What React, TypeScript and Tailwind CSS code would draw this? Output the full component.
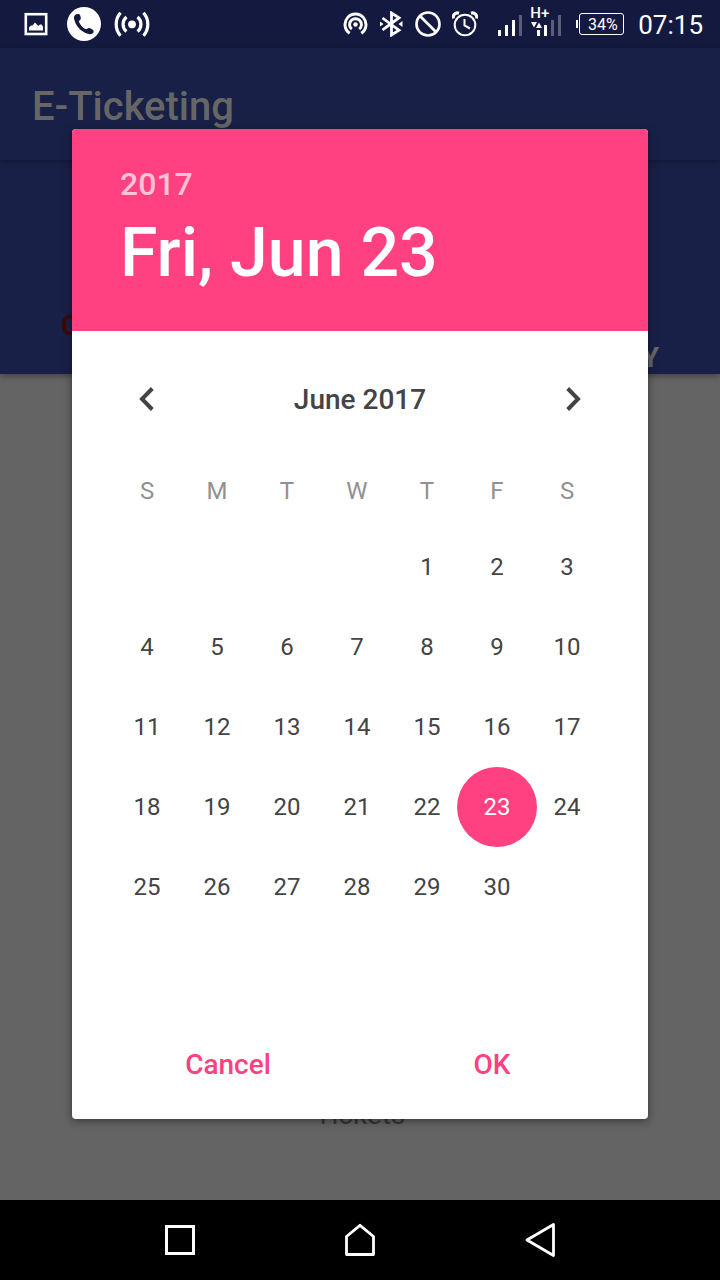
import React, { useState } from "react";

const WEEKDAYS = [
  { short: "S", name: "Sunday" },
  { short: "M", name: "Monday" },
  { short: "T", name: "Tuesday" },
  { short: "W", name: "Wednesday" },
  { short: "T", name: "Thursday" },
  { short: "F", name: "Friday" },
  { short: "S", name: "Saturday" },
];

const WEEKS: (number | null)[][] = [
  [null, null, null, null, 1, 2, 3],
  [4, 5, 6, 7, 8, 9, 10],
  [11, 12, 13, 14, 15, 16, 17],
  [18, 19, 20, 21, 22, 23, 24],
  [25, 26, 27, 28, 29, 30, null],
];

function StatusBar() {
  return (
    <header className="flex h-12 items-center justify-between bg-[#14193f] pr-4 pl-6 text-white">
      <div className="flex items-center">
        <svg className="h-6 w-6" viewBox="0 0 24 24" fill="none" aria-hidden="true">
          <rect x="1.800" y="2.200" width="20.400" height="19.800" stroke="#fff" strokeWidth="2.600" />
          <path d="M5 18.500V15.500l2-2h1.500L11 10.500l2.300 2.500 1 1 1.700-1.500h1.500l1.500 2v4z" fill="#fff" />
        </svg>
        <svg className="ml-[19px] h-[34px] w-[34px]" viewBox="0 0 34 34" aria-hidden="true">
          <circle cx="17" cy="17" r="17" fill="#fff" />
          <path
            d="M9.200 7.200c1.400-.6 3.300-.3 3.800.7.6 1.200.9 2.600.8 3.800-.2 1.300-1.700 1.900-2 2.600.7 2.600 4.300 7.100 7.200 8 .8-.1 1.800-1.600 3.200-1.300 1.300.3 2.700.9 3.700 1.700.9.8 1 2.500 0 3.500-1.200 1-3.300 1.200-5.300.6C13.500 24.600 8 18 7 11.300c-.3-1.800.7-3.400 2.200-4.100z"
            fill="#14193f"
          />
        </svg>
        <svg className="ml-[13px] h-7 w-9" viewBox="0 0 36 28" fill="none" stroke="#fff" strokeWidth="3.200" aria-hidden="true">
          <circle cx="18" cy="14.300" r="3.900" fill="#fff" stroke="none" />
          <path d="M12.500 7a9.500 9.500 0 0 0 0 14.600M23.500 7a9.500 9.500 0 0 1 0 14.600M6.500 2.800a17.500 17.500 0 0 0 0 23M29.500 2.800a17.500 17.500 0 0 1 0 23" />
        </svg>
      </div>

      <div className="flex items-center">
        <svg className="h-[26px] w-[26px]" viewBox="0 0 26 26" fill="none" stroke="#fff" strokeWidth="2.900" aria-hidden="true">
          <circle cx="12.500" cy="13.500" r="2.200" fill="#fff" stroke="none" />
          <path d="M6.700 22.300a10.500 10.500 0 1 1 11.600 0M8.800 18.200a5.900 5.900 0 1 1 7.400 0" />
        </svg>
        <svg className="ml-[11px] h-[26px] w-6" viewBox="0 0 24 26" fill="none" stroke="#fff" strokeWidth="2.800" aria-hidden="true">
          <path d="M2.500 7 10.500 13l8.500 6.200-7.500 4.800V2L19 6.800 10.500 13l-8 6" />
          <path d="M0 10.500 3.500 13 0 15.500zM22.500 10l-4 3 4 3z" fill="#fff" stroke="none" />
        </svg>
        <svg className="ml-[11px] h-[26px] w-[26px]" viewBox="0 0 26 26" fill="none" stroke="#fff" strokeWidth="2.600" aria-hidden="true">
          <circle cx="13" cy="13" r="11.500" />
          <path d="M5 5l16 16" />
        </svg>
        <svg className="ml-[11px] h-[26px] w-[26px]" viewBox="0 0 26 26" fill="none" stroke="#fff" strokeWidth="2" aria-hidden="true">
          <circle cx="13" cy="14" r="10.300" />
          <path d="M12.500 8v6.500l5.500 3" />
          <path d="M1.300 7.500C.5 4 3.500 1.200 7 2.200M24.700 7.500C25.500 4 22.500 1.200 19 2.200" strokeWidth="3.200" />
        </svg>
        <svg className="ml-5 h-12 w-6" viewBox="0 0 24 48" fill="#fff" aria-hidden="true">
          <path d="M0 30h3v6H0zM7 25h3v11H7zM14 20h3v16h-3z" />
          <path d="M21 15h3v21h-3z" fill="#5b5e79" />
        </svg>
        <div className="relative ml-2 h-12 w-8">
          <span className="absolute top-1 left-0 text-[15px] leading-[18px] font-medium">H+</span>
          <svg className="h-12 w-8" viewBox="0 0 32 48" fill="#fff" aria-hidden="true">
            <path d="M1 22h6l-3 5.500zM6 28h6l-3-5.500zM7 30h3v6H7zM14 25h3v11h-3z" />
            <path d="M21 20h3v16h-3zM28 15h3v21h-3z" fill="#5b5e79" />
          </svg>
        </div>
        <div className="ml-3.5 flex items-center">
          <span className="h-2 w-0.5 bg-white" />
          <span className="ml-px flex h-[22px] w-[45px] items-center justify-center rounded-[3px] border border-white pt-0.5 pl-0.5 text-[16px] leading-5">
            34%
          </span>
        </div>
        <time className="ml-3.5 pt-0.5 pr-px text-[26px] leading-8">07:15</time>
      </div>
    </header>
  );
}

function DatePicker() {
  const [selected, setSelected] = useState(23);
  return (
    <section
      role="dialog"
      aria-label="Select date"
      className="w-full overflow-hidden rounded-[4px] bg-white shadow-[0_2px_8px_rgba(0,0,0,0.45)]"
    >
      <div className="bg-[#ff4081] px-12 pt-9 pb-[38px] text-white">
        <button type="button" className="block text-[32px] leading-[38px] font-medium text-[#ffc2d7]">
          2017
        </button>
        <h2 className="mt-2.5 text-[68px] leading-[80px] font-medium">Fri, Jun 23</h2>
      </div>

      <div className="flex h-[108px] items-center justify-between px-10 pt-7 text-[#444]">
        <button type="button" aria-label="Previous month" className="flex h-20 w-[70px] items-center justify-center">
          <svg className="h-6 w-4" viewBox="0 0 16 24" fill="none" stroke="#444" strokeWidth="4" aria-hidden="true">
            <path d="M13.300 1.500 3 12l10.300 10.500" />
          </svg>
        </button>
        <h3 className="pt-0.5 text-[28px] leading-8 font-medium">June 2017</h3>
        <button type="button" aria-label="Next month" className="flex h-20 w-[70px] items-center justify-center">
          <svg className="h-6 w-4" viewBox="0 0 16 24" fill="none" stroke="#444" strokeWidth="4" aria-hidden="true">
            <path d="M2.700 1.500 13 12 2.700 22.500" />
          </svg>
        </button>
      </div>

      <div className="pt-4 pr-[46px] pb-20 pl-10">
        <table className="w-full table-fixed text-center text-[24px] leading-7 text-[#444]">
          <thead>
            <tr className="h-[72px] text-[#919191]">
              {WEEKDAYS.map((d) => (
                <th key={d.name} scope="col" abbr={d.name} className="p-0 text-center font-normal">
                  {d.short}
                </th>
              ))}
            </tr>
          </thead>
          <tbody>
            {WEEKS.map((week, i) => (
              <tr key={i} className="h-20">
                {week.map((day, j) => (
                  <td key={j} className="p-0">
                    {day !== null && (
                      <button
                        type="button"
                        aria-pressed={day === selected}
                        onClick={() => setSelected(day)}
                        className={
                          day === selected
                            ? "-mx-[5px] flex h-20 w-20 items-center justify-center rounded-full bg-[#ff4081] text-white"
                            : "-mx-[5px] flex h-20 w-20 items-center justify-center rounded-full"
                        }
                      >
                        {day}
                      </button>
                    )}
                  </td>
                ))}
              </tr>
            ))}
          </tbody>
        </table>
      </div>

      <div className="grid h-28 grid-cols-2 px-6 text-[28px] leading-8 font-medium text-[#ff4081]">
        <button type="button" className="pt-1">Cancel</button>
        <button type="button" className="pt-1">OK</button>
      </div>
    </section>
  );
}

function NavBar() {
  return (
    <nav className="flex h-20 items-center justify-center gap-[140px] bg-black">
      <button type="button" aria-label="Recent apps">
        <svg className="h-10 w-10" viewBox="0 0 40 40" fill="none" stroke="#fff" strokeWidth="3" aria-hidden="true">
          <rect x="6.500" y="6.500" width="27" height="27" />
        </svg>
      </button>
      <button type="button" aria-label="Home">
        <svg className="h-10 w-10" viewBox="0 0 40 40" fill="none" stroke="#fff" strokeWidth="2.800" strokeLinejoin="round" aria-hidden="true">
          <path d="M6.500 34.500v-18L20 5.300l13.500 11.200v18z" />
        </svg>
      </button>
      <button type="button" aria-label="Back">
        <svg className="h-10 w-10" viewBox="0 0 40 40" fill="none" stroke="#fff" strokeWidth="2.800" strokeLinejoin="round" aria-hidden="true">
          <path d="M33.500 4.500v31L7 20z" />
        </svg>
      </button>
    </nav>
  );
}

export default function App() {
  return (
    <div className="flex min-h-screen flex-col bg-[#646464] font-['Roboto',sans-serif]">
      <StatusBar />
      <main className="relative flex flex-1 flex-col">
        <div className="relative flex h-28 items-center bg-[#192047] px-8 pt-1.5 shadow-[0_2px_6px_rgba(0,0,0,0.3)]">
          <h1 className="text-[40px] leading-[48px] font-medium text-[#666]">E-Ticketing</h1>
        </div>
        <div className="flex h-[214px] flex-col justify-end bg-[#192047] px-[61px] shadow-[0_2px_6px_rgba(0,0,0,0.35)]">
          <span className="text-[28px] leading-8 font-bold text-[#3d0808]">C</span>
          <span className="self-end text-[28px] leading-8 font-bold text-[#666]">Y</span>
        </div>
        <p className="mt-auto pb-[69px] text-center text-[28px] leading-8 text-[#363636]">Tickets</p>
        <div className="absolute inset-0 flex items-center px-[10%]">
          <DatePicker />
        </div>
      </main>
      <NavBar />
    </div>
  );
}
